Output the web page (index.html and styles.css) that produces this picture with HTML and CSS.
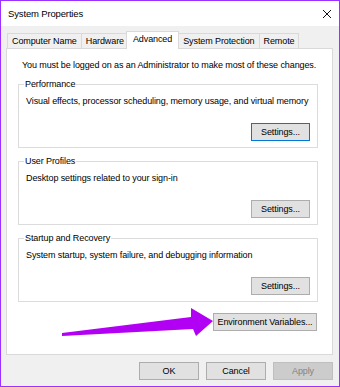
FILE: index.html
```html
<!DOCTYPE html>
<html>
<head>
<meta charset="utf-8">
<link rel="stylesheet" href="styles.css">
</head>
<body>
<div class="window">
  <div class="titlebar">
    <span class="title">System Properties</span>
    <svg class="close" width="10" height="10" viewBox="0 0 10 10"><path d="M1 1 L9 9 M9 1 L1 9" stroke="#111" stroke-width="1"/></svg>
  </div>
  <div class="body">
    <div class="tabs">
      <div class="tab">Computer Name</div>
      <div class="tab">Hardware</div>
      <div class="tab active">Advanced</div>
      <div class="tab">System Protection</div>
      <div class="tab">Remote</div>
    </div>
    <div class="panel">
      <p class="intro">You must be logged on as an Administrator to make most of these changes.</p>
      <fieldset class="group">
        <legend>Performance</legend>
        <p class="desc">Visual effects, processor scheduling, memory usage, and virtual memory</p>
        <div class="actions"><button class="btn default">Settings...</button></div>
      </fieldset>
      <fieldset class="group">
        <legend>User Profiles</legend>
        <p class="desc">Desktop settings related to your sign-in</p>
        <div class="actions"><button class="btn">Settings...</button></div>
      </fieldset>
      <fieldset class="group">
        <legend>Startup and Recovery</legend>
        <p class="desc">System startup, system failure, and debugging information</p>
        <div class="actions"><button class="btn">Settings...</button></div>
      </fieldset>
      <div class="env"><button class="btn wide">Environment Variables...</button></div>
    </div>
    <div class="footer">
      <button class="btn">OK</button>
      <button class="btn">Cancel</button>
      <button class="btn disabled">Apply</button>
    </div>
  </div>
  <svg class="arrow" width="340" height="387" viewBox="0 0 340 387">
    <polygon points="62,333 191,317 191,308 213,321 196,336 193,329 62,336" fill="#b200f4"/>
  </svg>
</div>
</body>
</html>
```

FILE: styles.css
```css
* { box-sizing: border-box; }
html, body { margin: 0; padding: 0; }
body {
  font-family: "Liberation Sans", Arial, sans-serif;
  font-size: 9px;
  letter-spacing: -0.1px;
  color: #000;
  background: #fff;
}
.window {
  position: relative;
  width: 340px;
  height: 387px;
  border: 1px solid #9b30ff;
  display: flex;
  flex-direction: column;
  background: #f0f0f0;
  white-space: nowrap;
}
.titlebar {
  height: 25px;
  flex: none;
  background: #fff;
  display: flex;
  align-items: center;
  justify-content: space-between;
  padding: 0 7px 0 7px;
}
.title { font-size: 9.5px; letter-spacing: -0.15px; }
.close { display: block; }
.body {
  flex: 1;
  min-height: 0;
  display: flex;
  flex-direction: column;
  padding: 5px 6px 0 5px;
}
.tabs {
  display: flex;
  align-items: flex-end;
  padding-left: 1px;
  height: 17px;
  flex: none;
}
.tab {
  height: 15px;
  line-height: 15px;
  padding: 0 4px;
  border: 1px solid #d9d9d9;
  border-bottom: none;
  background: #f0f0f0;
  margin-right: -1px;
}
.tab.active {
  position: relative;
  z-index: 1;
  height: 18px;
  line-height: 15px;
  margin: 0 -1px -1px -2px;
  padding: 0 6px;
  background: #fff;
}
.panel {
  flex: 1;
  min-height: 0;
  background: #fff;
  border: 1px solid #d9d9d9;
  display: flex;
  flex-direction: column;
}
.intro {
  margin: 10px 0 0 15px;
  line-height: 12px;
}
.group {
  margin: 7px 14px 0 11px;
  border: 1px solid #dcdcdc;
  padding: 0 7px 6px 7px;
  min-width: 0;
}
.group + .group { margin-top: 7px; }
.group legend {
  padding: 0 1px;
  margin-left: -2px;
  line-height: 12px;
}
.desc {
  margin: 5px 0 0;
  line-height: 12px;
}
.actions {
  display: flex;
  justify-content: flex-end;
  margin-top: 16px;
}
.env {
  display: flex;
  justify-content: flex-end;
  margin: 11px 15px 0 0;
}
.btn {
  font-family: inherit;
  font-size: 9px;
  letter-spacing: -0.1px;
  color: #000;
  width: 59px;
  height: 18px;
  padding: 0;
  background: #e1e1e1;
  border: 1px solid #adadad;
  border-radius: 0;
  line-height: 16px;
  white-space: nowrap;
}
.btn.default { border-color: #0078d7; }
.btn.wide { width: 104px; }
.btn.disabled {
  background: #cccccc;
  border-color: #bfbfbf;
  color: #838383;
}
.footer {
  flex: none;
  display: flex;
  justify-content: flex-end;
  gap: 7px;
  padding: 7px 0 6px;
}
.footer .btn { width: 60px; }
.arrow {
  position: absolute;
  left: -1px;
  top: -1px;
  pointer-events: none;
}
```
